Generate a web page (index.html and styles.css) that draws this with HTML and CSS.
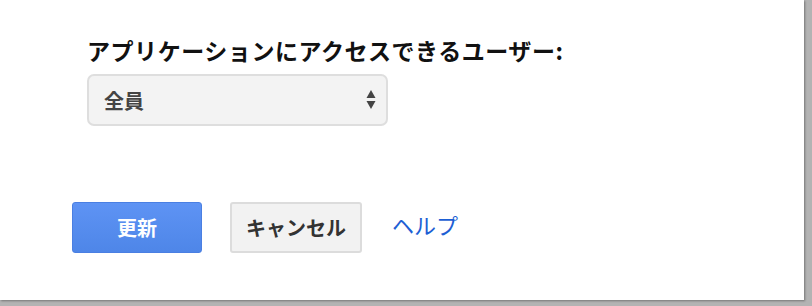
FILE: index.html
```html
<!DOCTYPE html>
<html>
<head>
	<title>共有設定</title>
	<link rel="stylesheet" href="styles.css">
</head>
<body>
	<div class="dialog">
		<div class="field">
			<div class="label">アプリケーションにアクセスできるユーザー:</div>
			<div class="select">
				<span>全員</span>
				<svg class="arrows" width="10" height="20" viewBox="0 0 10 20">
					<polygon points="5,0 9.5,8 0.5,8" fill="#444"/>
					<polygon points="0.5,11 9.5,11 5,19" fill="#444"/>
				</svg>
			</div>
		</div>
		<div class="buttons">
			<div class="btn primary">更新</div>
			<div class="btn">キャンセル</div>
			<a class="help" href="#">ヘルプ</a>
		</div>
	</div>
</body>
</html>
```

FILE: styles.css
```css
*{padding:0; margin:0; box-sizing:border-box;}
body{background:#b3b3b3; width:812px; height:306px; overflow:hidden; font-family:"Noto Sans CJK JP","Noto Sans",sans-serif;}
.dialog{width:804px; height:300px; background:#fff; box-shadow:1px 1px 2px rgba(0,0,0,.35); padding:30px 0 0 72px;}
.field{margin-left:15px;}
.label{font-size:23px; font-weight:bold; color:#111; line-height:40px; letter-spacing:0.55px;}
.select{margin-top:4px; width:301px; height:52px; border:2px solid #dedede; border-radius:7px; background:#f3f3f3; display:flex; align-items:center; justify-content:space-between; padding:0 10px 0 15px; font-size:20px; font-weight:bold; color:#444;}
.arrows{display:block;}
.buttons{display:flex; align-items:center; margin-top:76px;}
.btn{height:51px; width:131px; border:1px solid #dcdcdc; border-radius:3px; background:#f2f2f2; color:#333; font-size:20px; font-weight:bold; display:flex; align-items:center; justify-content:center; margin-right:28px;}
.btn.primary{background:linear-gradient(#5e93f4,#4e86e8); border-color:#4a7fe2; color:#fff; width:130px;}
.btn + .btn{width:132px; border-width:2px;}
.help{color:#1d5fd4; font-size:22px; text-decoration:none; margin-left:2px; margin-top:-8px;}
```
